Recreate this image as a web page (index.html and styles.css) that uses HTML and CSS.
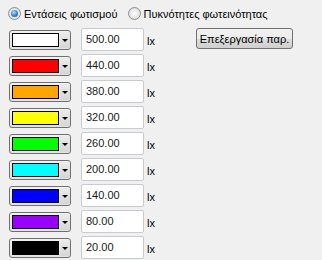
FILE: index.html
```html
<!DOCTYPE html>
<html lang="en">
<head>
    <meta charset="UTF-8">
    <title>Φωτισμός</title>
    <link rel="stylesheet" href="styles.css">
</head>
<body>
    <div class="panel">
        <div class="mode-row">
            <label class="radio"><span class="radio-dot checked"></span>Εντάσεις φωτισμού</label>
            <label class="radio"><span class="radio-dot"></span>Πυκνότητες φωτεινότητας</label>
        </div>

        <div class="main">
            <div class="levels">
                <div class="level">
                    <div class="combo"><span class="swatch" style="background:#ffffff"></span><span class="drop"></span></div>
                    <div class="value">500.00</div><span class="unit">lx</span>
                </div>
                <div class="level">
                    <div class="combo"><span class="swatch" style="background:#ff0000"></span><span class="drop"></span></div>
                    <div class="value">440.00</div><span class="unit">lx</span>
                </div>
                <div class="level">
                    <div class="combo"><span class="swatch" style="background:#ffa500"></span><span class="drop"></span></div>
                    <div class="value">380.00</div><span class="unit">lx</span>
                </div>
                <div class="level">
                    <div class="combo"><span class="swatch" style="background:#ffff00"></span><span class="drop"></span></div>
                    <div class="value">320.00</div><span class="unit">lx</span>
                </div>
                <div class="level">
                    <div class="combo"><span class="swatch" style="background:#00ff00"></span><span class="drop"></span></div>
                    <div class="value">260.00</div><span class="unit">lx</span>
                </div>
                <div class="level">
                    <div class="combo"><span class="swatch" style="background:#00ffff"></span><span class="drop"></span></div>
                    <div class="value">200.00</div><span class="unit">lx</span>
                </div>
                <div class="level">
                    <div class="combo"><span class="swatch" style="background:#0000ff"></span><span class="drop"></span></div>
                    <div class="value">140.00</div><span class="unit">lx</span>
                </div>
                <div class="level">
                    <div class="combo"><span class="swatch" style="background:#9900ff"></span><span class="drop"></span></div>
                    <div class="value">80.00</div><span class="unit">lx</span>
                </div>
                <div class="level">
                    <div class="combo"><span class="swatch" style="background:#000000"></span><span class="drop"></span></div>
                    <div class="value">20.00</div><span class="unit">lx</span>
                </div>
            </div>
            <div class="side">
                <button class="button">Επεξεργασία παρ.</button>
            </div>
        </div>
    </div>
</body>
</html>
```

FILE: styles.css
```css
body {
    margin: 0;
    background: #f0f0f0;
    font-family: "Liberation Sans", Arial, sans-serif;
    font-size: 11px;
    color: #000;
}

.panel {
    width: 322px;
    height: 260px;
    overflow: hidden;
}

.mode-row {
    display: flex;
    gap: 10px;
    padding: 6px 0 0 8px;
    height: 24px;
    box-sizing: border-box;
}

.radio {
    display: flex;
    align-items: center;
    gap: 3px;
    height: 15px;
}

.radio-dot {
    width: 11px;
    height: 11px;
    border: 1px solid #8e8f8f;
    border-radius: 50%;
    background: radial-gradient(circle at 50% 50%, #ffffff 0%, #e4e4e4 60%, #cfcfcf 100%);
    position: relative;
}

.radio-dot.checked::after {
    content: "";
    position: absolute;
    left: 2px;
    top: 2px;
    width: 7px;
    height: 7px;
    border-radius: 50%;
    background: radial-gradient(circle at 40% 35%, #b9e1fb 0%, #3d8ee0 45%, #10469b 100%);
}

.main {
    display: flex;
    padding-top: 4px;
}

.levels {
    width: 196px;
    box-sizing: border-box;
    display: flex;
    flex-direction: column;
    gap: 3px;
    padding-left: 9px;
}

.level {
    display: flex;
    align-items: center;
    height: 23px;
}

.combo {
    width: 62px;
    height: 20px;
    box-sizing: border-box;
    border: 1px solid #707070;
    border-radius: 3px;
    background: linear-gradient(#f2f2f2, #e2e2e2);
    display: flex;
    align-items: center;
    padding-left: 2px;
    margin-top: 1px;
}

.swatch {
    width: 48px;
    height: 14px;
    box-sizing: border-box;
    border: 1px solid #000;
}

.drop {
    width: 10px;
    height: 16px;
    margin-left: 1px;
    background: linear-gradient(#ebebeb, #d6d6d6);
    position: relative;
}

.drop::after {
    content: "";
    position: absolute;
    left: 2px;
    top: 7px;
    border-left: 3px solid transparent;
    border-right: 3px solid transparent;
    border-top: 3px solid #000;
}

.value {
    width: 63px;
    height: 23px;
    box-sizing: border-box;
    margin-left: 10px;
    background: #fff;
    border: 1px solid #c9cbd0;
    border-radius: 2px;
    padding: 4px 0 0 4px;
    color: #1a1a1a;
}

.unit {
    margin-left: 3px;
    padding-top: 3px;
}

.button {
    width: 97px;
    height: 21px;
    font-family: inherit;
    font-size: 11px;
    color: #000;
    border: 1px solid #707070;
    border-radius: 3px;
    background: linear-gradient(#f2f2f2 0%, #ebebeb 50%, #dddddd 51%, #cfcfcf 100%);
    padding: 0;
}
```
